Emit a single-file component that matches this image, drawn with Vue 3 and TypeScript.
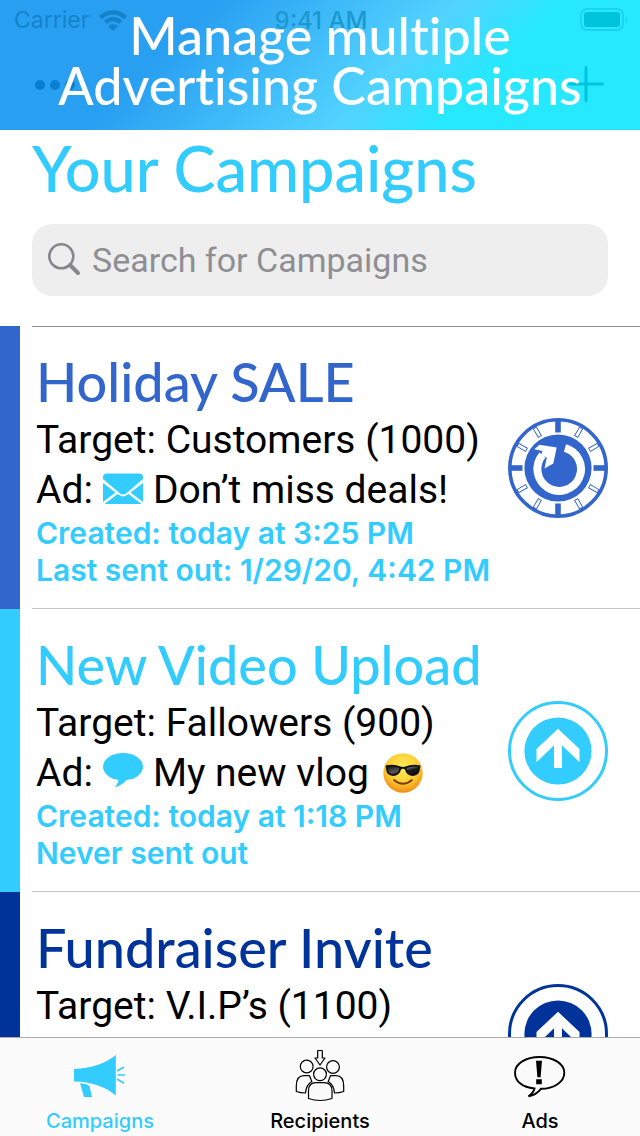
<script setup lang="ts">
import { ref } from 'vue'

interface Campaign {
  id: number
  name: string
  target: string
  tone: 'royal' | 'sky' | 'navy'
  action: 'repeat' | 'send'
  channel?: 'mail' | 'message'
  ad?: string
  cool?: boolean
  created?: string
  sent?: string
}

interface Tab {
  id: 'campaigns' | 'recipients' | 'ads'
  label: string
}

const campaigns: Campaign[] = [
  {
    id: 1,
    name: 'Holiday SALE',
    target: 'Customers (1000)',
    tone: 'royal',
    action: 'repeat',
    channel: 'mail',
    ad: 'Don’t miss deals!',
    created: 'Created: today at 3:25 PM',
    sent: 'Last sent out: 1/29/20, 4:42 PM',
  },
  {
    id: 2,
    name: 'New Video Upload',
    target: 'Fallowers (900)',
    tone: 'sky',
    action: 'send',
    channel: 'message',
    ad: 'My new vlog',
    cool: true,
    created: 'Created: today at 1:18 PM',
    sent: 'Never sent out',
  },
  {
    id: 3,
    name: 'Fundraiser Invite',
    target: 'V.I.P’s (1100)',
    tone: 'navy',
    action: 'send',
  },
]

const tabs: Tab[] = [
  { id: 'campaigns', label: 'Campaigns' },
  { id: 'recipients', label: 'Recipients' },
  { id: 'ads', label: 'Ads' },
]

const minorTicks = [30, 60, 120, 150, 210, 240, 300, 330]
const majorTicks = [0, 90, 180, 270]

const activeTab = ref<Tab['id']>('campaigns')
const query = ref('')
</script>

<template>
  <div class="screen">
    <header class="banner">
      <div class="status">
        <span class="carrier">
          Carrier
          <svg class="wifi" viewBox="0 0 28 22" aria-hidden="true">
            <g fill="none" stroke="currentColor" stroke-width="4.4">
              <path d="M1.5 8.6A18 18 0 0 1 26.5 8.6" />
              <path d="M6.3 13.3A11 11 0 0 1 21.7 13.3" />
            </g>
            <path d="M14 22L9 17.2A7.2 7.2 0 0 1 19 17.2Z" fill="currentColor" />
          </svg>
        </span>
        <span class="clock">9:41 AM</span>
        <svg class="battery" viewBox="0 0 48 24" aria-hidden="true">
          <rect x="1" y="1" width="42" height="21" rx="6" fill="none" stroke="#1bd5ee" stroke-width="2" />
          <rect x="4" y="4" width="36" height="15" rx="3" fill="#00c4dc" />
          <path d="M46 8.500q2 3 0 6z" fill="#1bd5ee" stroke="#1bd5ee" />
        </svg>
      </div>
      <div class="nav">
        <button class="nav-button more" type="button" aria-label="More">
          <svg width="42" height="12" viewBox="0 0 42 12" aria-hidden="true">
            <circle cx="6" cy="7" r="5" />
            <circle cx="21" cy="7" r="5" />
            <circle cx="36" cy="7" r="5" />
          </svg>
        </button>
        <button class="nav-button add" type="button" aria-label="Add campaign">
          <svg width="36" height="36" viewBox="0 0 36 36" aria-hidden="true">
            <path d="M18 1.500V34.500M1.500 18H34.500" fill="none" stroke="currentColor" stroke-width="3" stroke-linecap="round" />
          </svg>
        </button>
      </div>
      <p class="headline">Manage multiple<br />Advertising Campaigns</p>
    </header>

    <main class="content">
      <section class="intro">
        <h1>Your Campaigns</h1>
        <label class="search">
          <svg width="34" height="34" viewBox="0 0 34 34" aria-hidden="true">
            <circle cx="13.300" cy="13.300" r="12" fill="none" stroke="currentColor" stroke-width="2.600" />
            <path d="M22 22L30 30" stroke="currentColor" stroke-width="4" stroke-linecap="round" />
          </svg>
          <input v-model="query" type="search" placeholder="Search for Campaigns" aria-label="Search for Campaigns" />
        </label>
      </section>

      <ul class="list">
        <li v-for="c in campaigns" :key="c.id" class="row" :class="c.tone">
          <div class="body">
            <div class="details">
              <h2>{{ c.name }}</h2>
              <p class="line">Target: {{ c.target }}</p>
              <p v-if="c.ad" class="line ad">
                <span>Ad:</span>
                <svg v-if="c.channel === 'mail'" class="channel" viewBox="0 0 40 34" role="img" aria-label="Email">
                  <path d="M0 7.500Q0 3.500 4 3.500H36Q40 3.500 40 7.500V9L23 23.500Q20 25.500 17 23.500L0 9Z" />
                  <path d="M0 13L12.500 22.500L0 32ZM40 13L27.500 22.500L40 32Z" />
                  <path d="M1.500 34L14.500 24L17.500 25.800Q20 27 22.500 25.800L25.500 24L38.500 34Z" />
                </svg>
                <svg v-else class="channel" viewBox="0 0 40 34" role="img" aria-label="Message">
                  <ellipse cx="20" cy="13.700" rx="20" ry="13.700" />
                  <path d="M15.500 25Q15.500 31 11.500 34.300Q20 32 24 26.500Z" />
                </svg>
                <span>{{ c.ad }}</span>
                <svg v-if="c.cool" class="emoji" viewBox="0 0 40 40" role="img" aria-label="Smiling face with sunglasses">
                  <defs>
                    <radialGradient id="face" cx="50%" cy="35%" r="66%">
                      <stop offset="0" stop-color="#ffee5a" />
                      <stop offset="0.600" stop-color="#fdcc35" />
                      <stop offset="1" stop-color="#ee8a12" />
                    </radialGradient>
                    <linearGradient id="lens" x1="0" y1="0" x2="1" y2="1">
                      <stop offset="0" stop-color="#151515" />
                      <stop offset="0.450" stop-color="#5b5b5b" />
                      <stop offset="0.600" stop-color="#1c1c1c" />
                      <stop offset="1" stop-color="#080808" />
                    </linearGradient>
                  </defs>
                  <circle cx="20" cy="20" r="19.700" fill="url(#face)" />
                  <path d="M2.500 12.500Q11 10.500 17.500 13.500Q20 14.300 22.500 13.500Q29 10.500 37.500 12.500L37 15.500Q36.500 22.500 30 23Q23.500 23 22 16.500Q20 14.800 18 16.500Q16.500 23 10 23Q3.500 22.500 3 15.500Z" fill="#111" />
                  <path d="M4.800 14Q11 12.500 16.500 15Q15 21.500 10 21.500Q5 21 4.800 14ZM23.500 15Q29 12.500 35.200 14Q35 21 30 21.500Q25 21.500 23.500 15Z" fill="url(#lens)" />
                  <path d="M11 27Q20 34.500 29 27" fill="none" stroke="#7a3c08" stroke-width="1.800" stroke-linecap="round" />
                </svg>
              </p>
              <p v-if="c.created" class="meta">{{ c.created }}</p>
              <p v-if="c.sent" class="meta">{{ c.sent }}</p>
            </div>
            <button class="action" type="button" :aria-label="c.action === 'repeat' ? 'Schedule ' + c.name : 'Send ' + c.name">
              <svg v-if="c.action === 'repeat'" viewBox="0 0 100 100" aria-hidden="true">
                <circle cx="50" cy="50" r="48.200" fill="none" stroke="currentColor" stroke-width="3.600" />
                <circle cx="50" cy="50" r="33.600" fill="currentColor" />
                <rect v-for="a in majorTicks" :key="a" x="47.200" y="2" width="5.600" height="12.500" fill="currentColor" :transform="`rotate(${a} 50 50)`" />
                <rect v-for="a in minorTicks" :key="a" x="48.200" y="3.800" width="3.600" height="9.800" fill="none" stroke="currentColor" stroke-width="0.900" :transform="`rotate(${a} 50 50)`" />
                <path d="M57 30A21.800 21.800 0 1 1 34.500 37" fill="none" stroke="#fff" stroke-width="8" />
                <path d="M26.300 31.300L31.500 26.700L48.700 29.500L45.300 45.500L36.500 50.500L38.800 39.500L33 37L34.500 33Z" fill="#fff" />
              </svg>
              <svg v-else viewBox="0 0 100 100" aria-hidden="true">
                <circle cx="50" cy="50" r="48.500" fill="none" stroke="currentColor" stroke-width="3" />
                <circle cx="50" cy="50" r="33.600" fill="currentColor" />
                <path d="M50 27.700L71.500 48V61.200L54 44.300V67H46V44.300L28.500 61.200V48Z" fill="#fff" />
              </svg>
            </button>
          </div>
        </li>
      </ul>
    </main>

    <nav class="tabs">
      <button v-for="t in tabs" :key="t.id" type="button" class="tab" :class="{ active: activeTab === t.id }" @click="activeTab = t.id">
        <svg v-if="t.id === 'campaigns'" viewBox="0 0 80 60" aria-hidden="true">
          <path d="M14 24Q40 23 55.800 10V50.500Q40 37 14 36.500Z" fill="currentColor" />
          <path d="M20 38.300Q26 38.500 29.500 41L32 52H24Z" fill="currentColor" />
          <path d="M57 26L64 22M57.500 30H65M57 34L64 38.300" fill="none" stroke="currentColor" stroke-width="1.600" />
        </svg>
        <svg v-else-if="t.id === 'recipients'" viewBox="0 0 80 60" aria-hidden="true">
          <g fill="none" stroke="currentColor" stroke-width="1.200" stroke-linejoin="round">
            <path d="M37.700 5.500H42.300V13H45L40 20L35 13H37.700Z" />
            <circle cx="26.700" cy="21.500" r="6.400" />
            <circle cx="53" cy="22" r="6.400" />
            <circle cx="40" cy="29.300" r="6.400" />
            <path d="M28.500 53.500V46Q28.500 37.700 36 37.700H44Q52 37.700 52 46V53.500Q40 57.500 28.500 53.500Z" />
            <path d="M16.300 46.500V41Q16.300 30.700 24 30.700H29.500L31.800 36.500Q26 40 25.500 48Q20.500 48 16.300 46.500Z" />
            <path d="M63.700 46.500V41Q63.700 30.700 56 30.700H50.500L48.200 36.500Q54 40 54.500 48Q59.500 48 63.700 46.500Z" />
          </g>
        </svg>
        <svg v-else viewBox="0 0 80 60" aria-hidden="true">
          <path d="M34.500 43.500C22 42.500 15 36 15 27.700C15 18.500 26 12 39.500 12S64.300 18.500 64.300 27.700S54 43.800 41 43.800Q36 50 28.500 51.300Q33.500 48 34.500 43.500Z" fill="none" stroke="currentColor" stroke-width="1.900" />
          <path d="M36 15.700H42L40.600 32.300H37.400ZM36.200 34.300H41.800V39.200H36.200Z" fill="currentColor" />
        </svg>
        <span>{{ t.label }}</span>
      </button>
    </nav>
  </div>
</template>

<style>
html,
body {
  margin: 0;
  background: #fff;
}
</style>

<style scoped>
.screen {
  display: flex;
  flex-direction: column;
  height: 100vh;
  overflow: hidden;
  background: #fff;
  color: #000;
  font-family: Inter, "Liberation Sans", sans-serif;
}

button {
  margin: 0;
  padding: 0;
  border: 0;
  background: none;
  color: inherit;
  font: inherit;
  cursor: pointer;
}

svg {
  display: block;
}

h1,
h2,
p,
ul {
  margin: 0;
  padding: 0;
}

.banner {
  position: relative;
  flex: none;
  height: 130px;
  background: linear-gradient(135deg, #299ff1 28%, #52d3ff 60%, #26e8ff 73%);
}

.status {
  display: grid;
  grid-template-columns: 1fr auto 1fr;
  align-items: center;
  height: 40px;
  padding: 0 12px 0 14px;
  font-size: 23px;
  color: #1483cb;
}

.carrier {
  display: flex;
  align-items: center;
  gap: 10px;
}

.wifi {
  width: 28px;
  height: 22px;
}

.clock {
  font-size: 24px;
  font-weight: 500;
  color: #1c98d0;
}

.battery {
  justify-self: end;
  width: 48px;
  height: 24px;
}

.nav {
  display: flex;
  justify-content: space-between;
  align-items: center;
  height: 88px;
  padding: 0 36px 0 34px;
}

.more {
  color: #0880d2;
  fill: currentColor;
}

.add {
  color: #00c4dc;
}

.headline {
  position: absolute;
  inset: 10px 0 auto;
  font: 500 52px/50px Lato, sans-serif;
  font-variant-ligatures: none;
  color: #fff;
  text-align: center;
}

.content {
  flex: 1;
  min-height: 0;
  overflow: hidden;
}

.intro {
  padding: 0 32px 30px;
}

h1 {
  margin-bottom: 18px;
  font: 500 63px/76px Lato, sans-serif;
  color: #33ccff;
}

.search {
  display: flex;
  align-items: center;
  gap: 10px;
  height: 72px;
  padding: 0 16px;
  border-radius: 20px;
  background: #eeeeef;
  color: #88888c;
}

.search input {
  flex: 1;
  min-width: 0;
  padding: 0;
  border: 0;
  outline: 0;
  background: none;
  font: 400 34px/42px Roboto, sans-serif;
  color: #000;
}

.search input::placeholder {
  color: #8e8e93;
  opacity: 1;
}

.list {
  list-style: none;
}

.row {
  display: flex;
  min-height: 283px;
  border-left: 20px solid var(--tone);
  box-sizing: border-box;
}

.royal {
  --tone: #3366cc;
}

.sky {
  --tone: #33ccff;
}

.navy {
  --tone: #003399;
}

.body {
  display: flex;
  flex: 1;
  align-items: center;
  justify-content: space-between;
  margin-left: 12px;
  padding: 0 32px 0 4px;
  border-top: 1px solid transparent;
  border-bottom: 1px solid #c6c6c8;
}

.row:first-child .body {
  border-top-color: #8e8e90;
}

.details {
  align-self: flex-start;
  padding-top: 22px;
  white-space: nowrap;
}

h2 {
  font: 500 54px/66px Lato, sans-serif;
  font-variant-ligatures: none;
  color: var(--tone);
}

.line {
  font-family: Roboto, sans-serif;
  font-size: 39px;
  line-height: 50px;
}

.ad {
  display: flex;
  gap: 10px;
}

.channel {
  width: 40px;
  height: 34px;
  margin-top: 5px;
  fill: #33ccff;
}

.emoji {
  width: 40px;
  height: 40px;
  margin: 5px 0 0 4px;
}

.meta {
  font-size: 30px;
  font-weight: 600;
  line-height: 37px;
  color: #33ccff;
}

.action {
  flex: none;
  width: 100px;
  height: 100px;
  color: var(--tone);
}

.tabs {
  display: grid;
  grid-template-columns: repeat(3, 1fr);
  gap: 20px;
  flex: none;
  padding: 7px 0 3px;
  border-top: 1px solid #a9abab;
  background: #fbfbfb;
}

.tab {
  display: flex;
  flex-direction: column;
  align-items: center;
  gap: 4px;
  font-size: 20px;
  font-weight: 500;
  line-height: 24px;
}

.tab svg {
  width: 80px;
  height: 60px;
}

.active {
  color: #33ccff;
}
</style>
